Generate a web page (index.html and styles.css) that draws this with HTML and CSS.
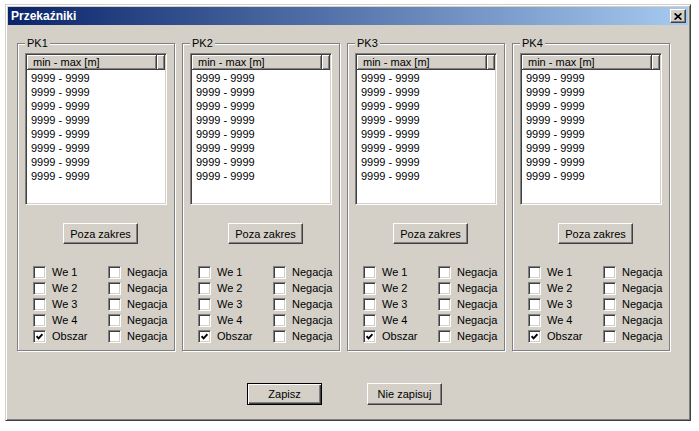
FILE: index.html
```html
<!DOCTYPE html>
<html lang="pl">
<head>
    <meta charset="UTF-8">
    <meta name="viewport" content="width=device-width, initial-scale=1.0">
    <title>Przekaźniki</title>
    <link rel="stylesheet" href="styles.css">
</head>
<body>
    <div class="window">
        <div class="titlebar">
            <span class="title">Przekaźniki</span>
            <button class="close" type="button">
                <svg width="8" height="7" viewBox="0 0 8 7"><path d="M0.6 0.4 L7.4 6.6 M7.4 0.4 L0.6 6.6" stroke="#000" stroke-width="1.7"/></svg>
            </button>
        </div>
        <div class="content">
            <div class="groups" id="groups">
                <!-- Groups are added dynamically here -->
            </div>
            <div class="actions">
                <button class="btn default" type="button">Zapisz</button>
                <button class="btn" type="button">Nie zapisuj</button>
            </div>
        </div>
    </div>
    <script>
        const relays = ['PK1', 'PK2', 'PK3', 'PK4'];
        const inputs = ['We 1', 'We 2', 'We 3', 'We 4', 'Obszar'];
        const checkSvg = '<svg width="7" height="7" viewBox="0 0 7 7"><polyline points="0.6,3.2 2.6,5.4 6.4,1.2" fill="none" stroke="#000" stroke-width="1.8"/></svg>';

        function checkbox(label, checked) {
            return `<label class="check"><span class="box">${checked ? checkSvg : ''}</span>${label}</label>`;
        }

        const container = document.getElementById('groups');

        relays.forEach(name => {
            const group = document.createElement('fieldset');
            group.className = 'group';

            let rows = '';
            for (let i = 0; i < 8; i++) {
                rows += '<li>9999 - 9999</li>';
            }

            let checks = '';
            inputs.forEach(input => {
                checks += checkbox(input, input === 'Obszar');
                checks += checkbox('Negacja', false);
            });

            group.innerHTML = `
                <legend>${name}</legend>
                <div class="listview">
                    <div class="lv-head"><span class="lv-col">min - max [m]</span><span class="lv-fill"></span></div>
                    <ul class="lv-rows">${rows}</ul>
                </div>
                <button class="btn range" type="button">Poza zakres</button>
                <div class="checks">${checks}</div>
            `;
            container.appendChild(group);
        });
    </script>
</body>
</html>
```

FILE: styles.css
```css
body {
    margin: 0;
    padding: 0;
    background-color: #fff;
    font-family: "Liberation Sans", Arial, sans-serif;
    font-size: 11px;
    color: #000;
}

.window {
    box-sizing: border-box;
    width: 686px;
    height: 417px;
    margin: 4px 0 0 5px;
    padding: 2px;
    background-color: #d4d0c8;
    border: 1px solid;
    border-color: #d4d0c8 #404040 #404040 #d4d0c8;
    box-shadow: inset 1px 1px #fff, inset -1px -1px #808080;
}

.titlebar {
    height: 18px;
    display: flex;
    align-items: center;
    justify-content: space-between;
    padding: 0 2px 0 3px;
    background: linear-gradient(to right, #0a246a, #a6caf0);
}

.title {
    color: #fff;
    font-weight: bold;
    font-size: 12px;
}

.close {
    box-sizing: border-box;
    width: 16px;
    height: 14px;
    padding: 0;
    display: flex;
    align-items: center;
    justify-content: center;
    background-color: #d4d0c8;
    border: 1px solid;
    border-color: #fff #404040 #404040 #fff;
    box-shadow: inset -1px -1px #808080;
}

.content {
    padding: 12px 0 0 9px;
}

.groups {
    display: flex;
    gap: 7px;
}

.group {
    box-sizing: border-box;
    width: 158px;
    min-width: 0;
    margin: 0;
    padding: 3px 7px 6px 7px;
    border: 1px solid #808080;
    box-shadow: inset 1px 1px #fff, 1px 1px #fff;
}

.group legend {
    padding: 0 2px;
    line-height: 13px;
    background-color: #d4d0c8;
}

.listview {
    box-sizing: border-box;
    height: 152px;
    padding: 1px;
    background-color: #fff;
    border: 1px solid;
    border-color: #808080 #fff #fff #808080;
    box-shadow: inset 1px 1px #404040, inset -1px -1px #d4d0c8;
}

.lv-head {
    display: flex;
    height: 15px;
}

.lv-col,
.lv-fill {
    box-sizing: border-box;
    height: 15px;
    padding-top: 1px;
    line-height: 13px;
    background-color: #d4d0c8;
    border-right: 1px solid #404040;
    border-bottom: 1px solid #404040;
    box-shadow: inset 1px 1px #fff, inset -1px -1px #808080;
}

.lv-col {
    width: 130px;
    padding-left: 6px;
}

.lv-fill {
    flex: 1;
}

.lv-rows {
    list-style: none;
    margin: 0;
    padding: 1px 0 0 4px;
}

.lv-rows li {
    line-height: 14px;
}

.btn {
    box-sizing: border-box;
    width: 75px;
    height: 22px;
    padding: 0;
    font-family: inherit;
    font-size: 11px;
    color: #000;
    background-color: #d4d0c8;
    border: 1px solid;
    border-color: #fff #404040 #404040 #fff;
    box-shadow: inset -1px -1px #808080;
}

.btn.default {
    border-color: #000;
    box-shadow: inset 1px 1px #fff, inset -1px -1px #404040, inset -2px -2px #808080;
}

.range {
    display: block;
    height: 21px;
    margin: 18px 0 0 38px;
}

.checks {
    display: grid;
    grid-template-columns: 75px auto;
    grid-auto-rows: 16px;
    margin-top: 20px;
    padding-left: 8px;
}

.check {
    display: flex;
    align-items: center;
    gap: 6px;
    line-height: 16px;
    white-space: nowrap;
}

.box {
    box-sizing: border-box;
    width: 13px;
    height: 13px;
    flex: none;
    display: flex;
    align-items: center;
    justify-content: center;
    background-color: #fff;
    border: 1px solid;
    border-color: #808080 #fff #fff #808080;
    box-shadow: inset 1px 1px #404040, inset -1px -1px #d4d0c8;
}

.actions {
    display: flex;
    justify-content: center;
    gap: 45px;
    margin-top: 32px;
    padding-right: 16px;
}
```
